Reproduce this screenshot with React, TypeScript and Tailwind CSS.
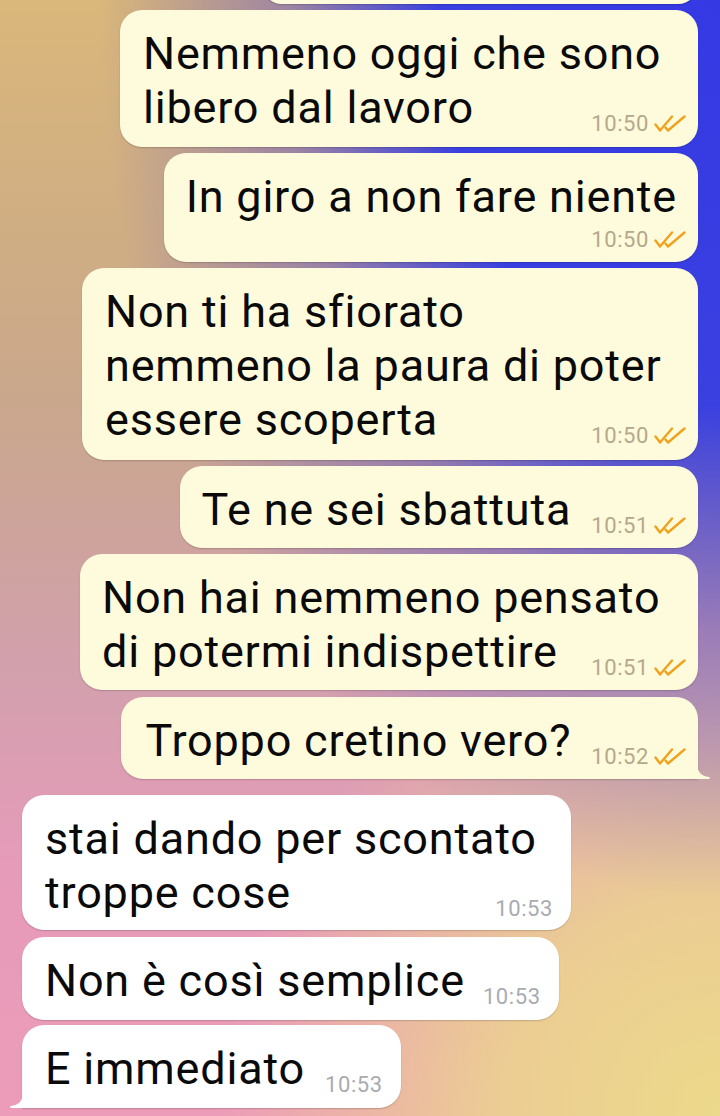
import React from "react";

const OUT_BG = "bg-[#fefbdc]";
const IN_BG = "bg-white";

function Ticks() {
  return (
    <svg width="33" height="17" viewBox="0 0 33 17" fill="none" className="shrink-0">
      <path d="M1.5 9.5 L6 15.5 L18 1.5" stroke="#f0a21e" strokeWidth="2.4" strokeLinecap="round" strokeLinejoin="round" />
      <path d="M11.5 12.5 L14 15.5 L30.5 1.5" stroke="#f0a21e" strokeWidth="2.4" strokeLinecap="round" strokeLinejoin="round" />
    </svg>
  );
}

function Time({ t, out }: { t: string; out: boolean }) {
  return (
    <span
      className={
        "mb-[3px] flex items-end gap-[5px] whitespace-nowrap text-[22px] leading-[16px] tracking-[0.6px] " +
        (out ? "text-[#b5a88b]" : "text-[#a9abb2]")
      }
    >
      <span>{t}</span>
      {out && <Ticks />}
    </span>
  );
}

function TailRight() {
  return (
    <svg width="14" height="15" viewBox="0 0 14 15" className="absolute bottom-0 right-[-13px]">
      <path d="M0 0 C0.5 8 4 12 12 13 Q14 13.6 12 15 L0 15 Z" fill="#fefbdc" />
    </svg>
  );
}

function TailLeft() {
  return (
    <svg width="14" height="15" viewBox="0 0 14 15" className="absolute bottom-0 left-[-13px]">
      <path d="M14 0 C13.5 8 10 12 2 13 Q0 13.6 2 15 L14 15 Z" fill="#ffffff" />
    </svg>
  );
}

const txt = "text-[45px] leading-[54px] tracking-[0.8px] text-[#0a0a0a]";
const shadow = "shadow-[0_1px_1.5px_rgba(0,0,0,0.18)]";

export default function App() {
  return (
    <div
      className={
        "w-[720px] h-[1116px] overflow-hidden [font-family:Roboto,'Liberation_Sans',sans-serif] " +
        "bg-[radial-gradient(ellipse_620px_900px_at_100%_0%,#3439e4_0%,#3a40e0_45%,rgba(100,86,200,0.5)_70%,rgba(120,92,190,0)_100%),radial-gradient(circle_at_100%_100%,#ecd98a_0%,rgba(236,217,138,0.8)_220px,rgba(236,217,138,0)_500px),linear-gradient(180deg,#dab77a_0%,#cfad84_22%,#c9a78c_36%,#d2a0ad_60%,#e69bb9_78%,#ec9cb8_100%)]"
      }
    >
      <div className="flex flex-col">
        {/* outgoing group */}
        <div className="flex flex-col items-end gap-[6px] pr-[22px]">
          <div className={`-mt-[36px] h-[40px] w-[436px] rounded-[22px] ${OUT_BG} ${shadow}`} />

          <div className={`grid w-[578px] rounded-[22px] pl-[23px] pr-[11px] pt-[17px] pb-[12px] ${OUT_BG} ${shadow}`}>
            <div className={`col-start-1 row-start-1 ${txt}`}>
              <div>Nemmeno oggi che sono</div>
              <div>libero dal lavoro</div>
            </div>
            <div className="col-start-1 row-start-1 self-end justify-self-end">
              <Time t="10:50" out />
            </div>
          </div>

          <div className={`flex flex-col rounded-[22px] pl-[22px] pr-[21px] pt-[17px] pb-[11px] ${OUT_BG} ${shadow}`}>
            <div className={`whitespace-nowrap ${txt}`}>In giro a non fare niente</div>
            <div className="-mr-[10px] flex h-[27px] items-end justify-end">
              <Time t="10:50" out />
            </div>
          </div>

          <div className={`grid w-[616px] rounded-[22px] pl-[23px] pr-[11px] pt-[17px] pb-[13px] ${OUT_BG} ${shadow}`}>
            <div className={`col-start-1 row-start-1 ${txt}`}>
              <div>Non ti ha sfiorato</div>
              <div>nemmeno la paura di poter</div>
              <div>essere scoperta</div>
            </div>
            <div className="col-start-1 row-start-1 self-end justify-self-end">
              <Time t="10:50" out />
            </div>
          </div>

          <div className={`flex items-end gap-[20px] rounded-[22px] pl-[22px] pr-[11px] pt-[17px] pb-[11px] ${OUT_BG} ${shadow}`}>
            <div className={`whitespace-nowrap ${txt}`}>Te ne sei sbattuta</div>
            <Time t="10:51" out />
          </div>

          <div className={`grid w-[618px] rounded-[22px] pl-[22px] pr-[11px] pt-[17px] pb-[11px] ${OUT_BG} ${shadow}`}>
            <div className={`col-start-1 row-start-1 ${txt}`}>
              <div>Non hai nemmeno pensato</div>
              <div>di potermi indispettire</div>
            </div>
            <div className="col-start-1 row-start-1 self-end justify-self-end">
              <Time t="10:51" out />
            </div>
          </div>

          <div className={`relative mt-px flex items-end gap-[20px] rounded-[22px] rounded-br-none pl-[24px] pr-[11px] pt-[17px] pb-[11px] ${OUT_BG} ${shadow}`}>
            <div className={`whitespace-nowrap ${txt}`}>Troppo cretino vero?</div>
            <Time t="10:52" out />
            <TailRight />
          </div>
        </div>

        {/* incoming group */}
        <div className="mt-[16px] flex flex-col items-start gap-[7px] pl-[22px]">
          <div className={`grid w-[549px] rounded-[22px] pl-[23px] pr-[18px] pt-[17px] pb-[10px] ${IN_BG} ${shadow}`}>
            <div className={`col-start-1 row-start-1 ${txt}`}>
              <div>stai dando per scontato</div>
              <div>troppe cose</div>
            </div>
            <div className="col-start-1 row-start-1 self-end justify-self-end">
              <Time t="10:53" out={false} />
            </div>
          </div>

          <div className={`flex items-end gap-[18px] rounded-[22px] pl-[23px] pr-[18px] pt-[17px] pb-[12px] ${IN_BG} ${shadow}`}>
            <div className={`whitespace-nowrap ${txt}`}>Non è così semplice</div>
            <Time t="10:53" out={false} />
          </div>

          <div className={`relative -mt-[2px] flex items-end gap-[20px] rounded-[22px] rounded-bl-none pl-[23px] pr-[18px] pt-[17px] pb-[12px] ${IN_BG} ${shadow}`}>
            <div className={`whitespace-nowrap ${txt}`}>E immediato</div>
            <Time t="10:53" out={false} />
            <TailLeft />
          </div>
        </div>
      </div>
    </div>
  );
}
